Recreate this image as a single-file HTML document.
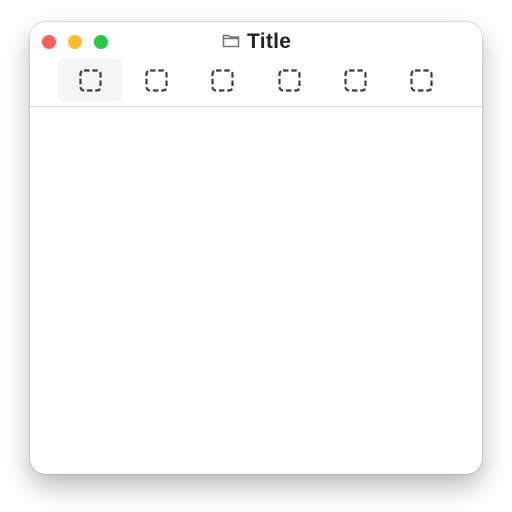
<!DOCTYPE html><html><head><style>
body{margin:0;width:512px;height:512px;background:#fff;position:relative;overflow:hidden;font-family:"Liberation Sans",sans-serif}
.win{position:absolute;left:30px;top:22px;width:452px;height:452px;border-radius:16px;background:#fff;box-shadow:0 12px 26px rgba(0,0,0,.28),0 0 0 1px rgba(0,0,0,.1)}
.d{position:absolute;width:14px;height:14px;border-radius:50%;top:35px}
.t{position:absolute;left:247px;top:30px;font-weight:bold;font-size:21px;color:#222;letter-spacing:.3px}
.sel{position:absolute;left:57px;top:59px;width:66px;height:42px;border-radius:8px;background:#f5f5f5}
.hr{position:absolute;left:30px;top:106px;width:452px;height:1px;background:#ddd}
svg.i{position:absolute;top:69px}
</style></head><body>
<div class="win"></div>
<div class="d" style="left:42px;background:#fe5f57"></div>
<div class="d" style="left:68px;background:#febc2e"></div>
<div class="d" style="left:94px;background:#28c840"></div>
<svg style="position:absolute;left:222px;top:33px" width="18" height="15" viewBox="0 0 18 15"><path d="M1.5 2.5h5l1.5 1.5h8.5v9.5h-15z M1.5 5.5h15" fill="none" stroke="#777" stroke-width="1.6"/></svg>
<div class="t">Title</div>
<div class="sel"></div>
<div class="hr"></div>
<svg class="i" style="left:79px" width="23" height="23"><rect x="1.5" y="1.5" width="20" height="20" rx="3.5" fill="none" stroke="#3c3c3c" stroke-width="2.2" stroke-dasharray="5.5 2.8"/></svg>
<svg class="i" style="left:145px" width="23" height="23"><rect x="1.5" y="1.5" width="20" height="20" rx="3.5" fill="none" stroke="#3c3c3c" stroke-width="2.2" stroke-dasharray="5.5 2.8"/></svg>
<svg class="i" style="left:211px" width="23" height="23"><rect x="1.5" y="1.5" width="20" height="20" rx="3.5" fill="none" stroke="#3c3c3c" stroke-width="2.2" stroke-dasharray="5.5 2.8"/></svg>
<svg class="i" style="left:278px" width="23" height="23"><rect x="1.5" y="1.5" width="20" height="20" rx="3.5" fill="none" stroke="#3c3c3c" stroke-width="2.2" stroke-dasharray="5.5 2.8"/></svg>
<svg class="i" style="left:344px" width="23" height="23"><rect x="1.5" y="1.5" width="20" height="20" rx="3.5" fill="none" stroke="#3c3c3c" stroke-width="2.2" stroke-dasharray="5.5 2.8"/></svg>
<svg class="i" style="left:410px" width="23" height="23"><rect x="1.5" y="1.5" width="20" height="20" rx="3.5" fill="none" stroke="#3c3c3c" stroke-width="2.2" stroke-dasharray="5.5 2.8"/></svg>
</body></html>
